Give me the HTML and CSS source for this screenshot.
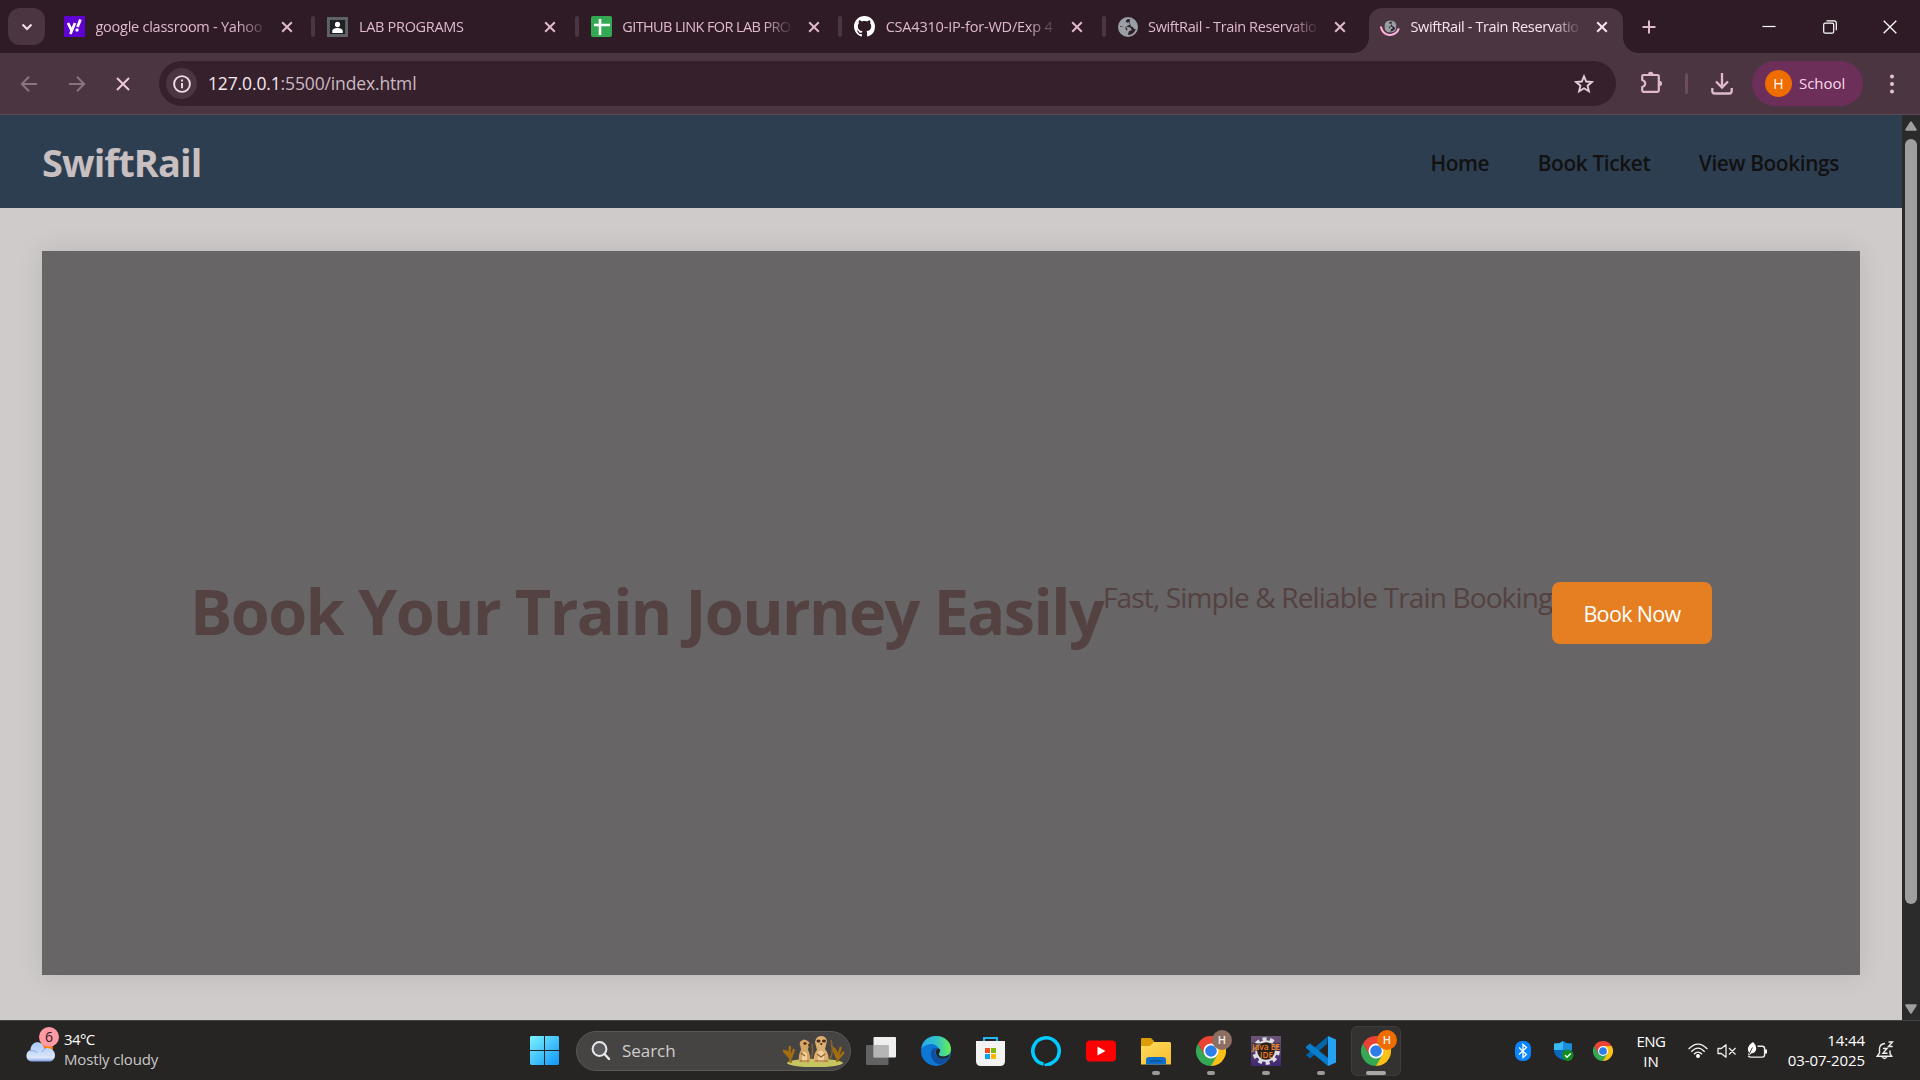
FILE: index.html
```html
<!DOCTYPE html>
<html lang="en">
<head>
<meta charset="utf-8">
<title>SwiftRail - Train Reservation</title>
<link rel="stylesheet" href="styles.css">
</head>
<body>
<svg class="defs" width="0" height="0">
  <symbol id="close" viewBox="0 0 12 12"><path d="M1.2 1.2 10.8 10.8M10.8 1.2 1.2 10.8" fill="none" stroke="currentColor" stroke-width="2"/></symbol>
  <symbol id="globe" viewBox="0 0 20 20"><circle cx="10" cy="10" r="9" fill="#2f1f29" stroke="#9aa0a6" stroke-width="2"/><path d="M1 10Q1 3 8 1.200h3Q7 3.500 8 5q2 1 3 0l1 2.500-4 2 4 1q2 1 1.500 3-3 0-3 2l-1 3.500C4 18.500 1 15 1 10h5q1 0 2 2-1 1 1 1.500 1-2-.5-3L1 9z" fill="#9aa0a6"/><path d="M12 2q5 1 7 7l-1 3q-3 0-3-2-3-.5-2.500-2.500Q11 5.500 12 2z" fill="#9aa0a6"/></symbol>
  <symbol id="chrome" viewBox="0 0 30 30"><path d="M28 7.500A15 15 0 0 1 15 30L15 15 15 7.500z" fill="#fbc116"/><path d="M15 30A15 15 0 0 1 2 7.500L8.500 18.700 21.500 18.700z" fill="#34a853"/><path d="M2 7.500A15 15 0 0 1 28 7.500H15L8.500 18.700z" fill="#ea4335"/><circle cx="15" cy="15" r="7.500" fill="#fff"/><circle cx="15" cy="15" r="5.800" fill="#2f7de9"/></symbol>
</svg>

<div class="screen">
  <header class="tabstrip">
    <button class="tab-search"><svg width="12" height="8" viewBox="0 0 12 8"><path d="m1.500 1.500 4.500 4.500 4.500-4.500" fill="none" stroke="#f3dbe7" stroke-width="2.200"/></svg></button>
    <div class="tab">
      <svg class="favicon" width="21" height="21" viewBox="0 0 21 21"><path d="M0 0h21v21H0z" fill="#5f01d1"/><path d="m4 7 3.500 7.200M11 7l-4.600 11" stroke="#fff" stroke-width="2.700" fill="none"/><path d="m16.500 3.500-3 7.500" stroke="#fff" stroke-width="2.800"/><circle cx="13" cy="14" r="1.700" fill="#fff"/></svg>
      <span class="tab-title t1">google classroom - Yahoo</span><svg class="x" width="12" height="12"><use href="#close"/></svg><i class="sep"></i>
    </div>
    <div class="tab">
      <svg class="favicon" width="21" height="20" viewBox="0 0 22 20" preserveAspectRatio="none"><path d="M0 0h22v20H0z" fill="#5f6368"/><path d="M3 3h16v14H3z" fill="#202124"/><circle cx="11" cy="7.500" r="2.700" fill="#fff"/><path d="M5.500 16v-2c0-4 11-4 11 0v2z" fill="#fff"/></svg>
      <span class="tab-title t2">LAB PROGRAMS</span><svg class="x" width="12" height="12"><use href="#close"/></svg><i class="sep"></i>
    </div>
    <div class="tab">
      <svg class="favicon" width="21" height="21" viewBox="0 0 21 21"><rect width="21" height="21" rx="2" fill="#34a853"/><path d="M9 3v16M3 9h16" stroke="#fff" stroke-width="2.600"/></svg>
      <span class="tab-title t3">GITHUB LINK FOR LAB PRO</span><svg class="x" width="12" height="12"><use href="#close"/></svg><i class="sep"></i>
    </div>
    <div class="tab">
      <svg class="favicon" width="21" height="21" viewBox="0 0 16 16"><path fill="#fff" d="M8 0C3.580 0 0 3.580 0 8c0 3.540 2.290 6.530 5.470 7.590.4.070.55-.17.55-.38 0-.19-.010-.82-.010-1.490-2.010.37-2.530-.49-2.690-.94-.09-.23-.48-.94-.82-1.130-.28-.15-.68-.52-.010-.53.63-.010 1.080.58 1.230.82.72 1.210 1.870.87 2.330.66.070-.52.28-.87.51-1.070-1.780-.2-3.640-.89-3.640-3.950 0-.87.31-1.590.82-2.150-.08-.2-.36-1.020.08-2.120 0 0 .67-.21 2.200.82.64-.18 1.320-.27 2-.27s1.360.09 2 .27c1.530-1.040 2.200-.82 2.200-.82.44 1.100.16 1.920.08 2.120.51.56.82 1.270.82 2.150 0 3.070-1.870 3.750-3.650 3.950.29.25.54.73.54 1.480 0 1.070-.010 1.930-.010 2.200 0 .21.15.46.55.38A8.010 8.010 0 0 0 16 8c0-4.420-3.580-8-8-8z"/></svg>
      <span class="tab-title t4">CSA4310-IP-for-WD/Exp 4</span><svg class="x" width="12" height="12"><use href="#close"/></svg><i class="sep"></i>
    </div>
    <div class="tab">
      <svg class="favicon" width="20" height="20"><use href="#globe"/></svg>
      <span class="tab-title t5">SwiftRail - Train Reservatio</span><svg class="x" width="12" height="12"><use href="#close"/></svg>
    </div>
    <div class="tab active">
      <svg class="favicon" width="20" height="21" viewBox="0 0 21 21"><svg x="4.500" y="4" width="13" height="13"><use href="#globe"/></svg><path d="M1 10.500A9.600 9.600 0 0 0 19.800 12.500" fill="none" stroke="#ffb0dd" stroke-width="2.200"/></svg>
      <span class="tab-title t5">SwiftRail - Train Reservatio</span><svg class="x" width="12" height="12"><use href="#close"/></svg>
    </div>
    <svg class="newtab" width="14" height="14" viewBox="0 0 14 14"><path d="M7 .5v13M.5 7h13" stroke="#e0b9cf" stroke-width="2"/></svg>
    <div class="window-controls">
      <svg width="14" height="14" viewBox="0 0 14 14"><path d="M.5 6.500h13" stroke="#fff" stroke-width="1.200"/></svg>
      <svg width="14" height="14" viewBox="0 0 14 14"><rect x=".7" y="3.200" width="10" height="10" rx="1.500" fill="none" stroke="#fff" stroke-width="1.200"/><path d="M3.500.8H11q2.300 0 2.300 2.300v7.200" fill="none" stroke="#fff" stroke-width="1.200"/></svg>
      <svg width="14" height="14" viewBox="0 0 14 14"><path d="m.7.700 12.600 12.600m0-12.600L.7 13.300" stroke="#fff" stroke-width="1.300"/></svg>
    </div>
  </header>

  <div class="toolbar">
    <div class="nav-buttons">
      <svg width="18" height="18" viewBox="0 0 18 18"><path d="M17 9H2m7-7.300L1.800 9 9 16.300" fill="none" stroke="#8b7380" stroke-width="2"/></svg>
      <svg width="18" height="18" viewBox="0 0 18 18"><path d="M1 9h15M9 1.700 16.200 9 9 16.300" fill="none" stroke="#8b7380" stroke-width="2"/></svg>
      <svg width="14" height="14" viewBox="0 0 14 14"><path d="m1 1 12 12m0-12L1 13" stroke="#efc8dc" stroke-width="2"/></svg>
    </div>
    <div class="omnibox">
      <span class="info"><svg width="18" height="18" viewBox="0 0 18 18"><circle cx="9" cy="9" r="7.900" fill="none" stroke="#f3dbe7" stroke-width="1.900"/><path d="M9 8v5.200M9 4.600v2" stroke="#f3dbe7" stroke-width="1.900"/></svg></span>
      <span class="url"><b>127.0.0.1</b>:5500/index.html</span>
      <svg class="star" width="20" height="20" viewBox="0 0 20 20"><path d="m10 2.300 2.200 5.200 5.700.5-4.300 3.700 1.300 5.500-4.900-2.900-4.900 2.900 1.300-5.500L2.100 8l5.700-.5z" fill="none" stroke="#e4cdd8" stroke-width="1.900"/></svg>
    </div>
    <svg class="ext" width="24" height="24" viewBox="0 0 24 24"><path d="M4.500 4H18.500q1.300 0 1.300 1.300V19.500q0 1.300-1.300 1.300H4.500q-1.300 0-1.300-1.300V16q3-1 3-3.500t-3-3.500V5.300Q3.200 4 4.500 4z" fill="none" stroke="#e0b9cf" stroke-width="2.200" stroke-linejoin="round"/><path d="M9 3.500a2.700 2.700 0 0 1 5.400 0zM20.300 9.800a2.700 2.700 0 0 1 0 5.400z" fill="#e0b9cf"/></svg>
    <i class="bar"></i>
    <svg class="download" width="22" height="22" viewBox="0 0 22 22"><path d="M11 0v14M5 8.500l6 6 6-6M1.300 15v3q0 2.500 2.500 2.500h14.400q2.500 0 2.500-2.500v-3" fill="none" stroke="#e0b9cf" stroke-width="2.300"/></svg>
    <div class="profile"><span class="avatar">H</span><span class="profile-name">School</span></div>
    <svg class="dots" width="4" height="20" viewBox="0 0 4 20"><g fill="#e7c3d6"><circle cx="2" cy="2.500" r="2"/><circle cx="2" cy="10" r="2"/><circle cx="2" cy="17.500" r="2"/></g></svg>
  </div>

  <div class="viewport">
    <div class="page">
      <header class="site-header">
        <div class="logo">SwiftRail</div>
        <nav><a>Home</a><a>Book Ticket</a><a>View Bookings</a></nav>
      </header>
      <main class="content">
        <section class="hero">
          <h1>Book Your Train Journey Easily</h1>
          <p>Fast, Simple &amp; Reliable Train Booking</p>
          <button class="cta">Book Now</button>
        </section>
      </main>
    </div>
    <div class="scrollbar">
      <svg width="12" height="10" viewBox="0 0 12 10"><path d="M6 1.300 10.800 8.700H1.200z" fill="#9f9f9f" stroke="#9f9f9f" stroke-width="2" stroke-linejoin="round"/></svg>
      <i class="thumb"></i>
      <svg width="12" height="10" viewBox="0 0 12 10"><path d="M6 8.700 10.800 1.300H1.200z" fill="#9f9f9f" stroke="#9f9f9f" stroke-width="2" stroke-linejoin="round"/></svg>
    </div>
  </div>

  <footer class="taskbar">
    <div class="weather">
      <div class="cloud">
        <svg width="30" height="24" viewBox="0 0 30 24"><defs><linearGradient id="cl" x2="0" y2="1"><stop offset="0" stop-color="#a9cbfa"/><stop offset=".8" stop-color="#dbe6f8"/><stop offset="1" stop-color="#7f9ee2"/></linearGradient></defs><circle cx="21" cy="9" r="7" fill="#ff7a10"/><path d="M6 22.500a6 6 0 0 1-.5-11.500C6 1 18 1 19 9.500c5-2 11 1 11 6.500 0 4-2.500 6.500-6 6.500z" fill="url(#cl)"/><path d="M5 12c3-1 6 0 7 2M17 13c1-2 2-3 4-3.500" stroke="#7fa7ea" fill="none"/></svg>
        <span class="badge">6</span>
      </div>
      <div class="weather-text"><span class="temp">34°C</span><span class="sky">Mostly cloudy</span></div>
    </div>

    <div class="dock">
      <svg class="start" width="29" height="29" viewBox="0 0 29 29"><defs><linearGradient id="wn" gradientUnits="userSpaceOnUse" x2="29" y2="29"><stop stop-color="#7df3ff"/><stop offset="1" stop-color="#0f95f8"/></linearGradient></defs><path d="M1 0h13v14H0V1zM15 0h13l1 1v13H15zM0 15h14v14H1l-1-1zM15 15h14v13l-1 1H15z" fill="url(#wn)"/></svg>
      <div class="search">
        <svg width="20" height="20" viewBox="0 0 20 20"><circle cx="8.500" cy="8" r="6.900" fill="#5a595b" stroke="#e9eaef" stroke-width="2"/><path d="m13.500 13 4.500 5" stroke="#e9eaef" stroke-width="2.400" stroke-linecap="round"/></svg>
        <span>Search</span>
        <svg class="meerkats" width="62" height="32" viewBox="0 0 62 32">
          <ellipse cx="32" cy="28" rx="28" ry="4.200" fill="#c5c660"/>
          <path d="M8 28Q6 20 7 11M8 24l-7-8q5 1 7 6M8 23l3-9M54 27q1-8 4-15M54 23l-4-10q4 3 4 8M55 24l6-7" stroke="#a46d10" stroke-width="2.400" fill="none"/>
          <path d="M27 24q4-4 2-15M47 24q4-6 1-19" stroke="#8c6231" stroke-width="1.500" fill="none"/>
          <path d="M16 27q-1-7 2-12c0-4-2-5-1-8q4-5 9 0c1 3-1 5-1 8 3 6 2 9 1 13z" fill="#d5a565"/>
          <path d="M31 27q-1-8 3-12l-2-8q1-6 6-6t6 5l-2 8q5 6 3 14z" fill="#dcae70"/>
          <path d="M19 18q3-3 5 1v8h-5zM35 17q4-3 6 1v9h-6z" fill="#efd09c"/>
          <ellipse cx="22" cy="8.500" rx="1.600" ry="1.300" fill="#4a2b18"/><ellipse cx="35.500" cy="6" rx="2" ry="1.600" fill="#4a2b18"/><ellipse cx="41" cy="6" rx="2" ry="1.600" fill="#4a2b18"/><circle cx="38.300" cy="9" r="1.100" fill="#4a2b18"/><circle cx="26" cy="10" r="1" fill="#4a2b18"/>
          <path d="M17 26h9M32 26h13M18 18l4 3M34 19l4 3 4-3" stroke="#916027" stroke-width="1.200" fill="none"/>
        </svg>
      </div>
      <div class="app"><svg width="30" height="30" viewBox="0 0 30 30"><rect x="7.500" y="1" width="22.500" height="20.500" rx="1" fill="#efefef"/><rect y="9" width="22.500" height="20" rx="1" fill="#777" opacity=".75"/><path d="M7.500 9h15v12.500h-15z" fill="#b5b5b5"/></svg></div>
      <div class="app"><svg width="30" height="30" viewBox="0 0 30 30"><defs><linearGradient id="ed"><stop stop-color="#25a9ee"/><stop offset=".55" stop-color="#35c6c4"/><stop offset="1" stop-color="#68ef4b"/></linearGradient></defs><circle cx="15" cy="15" r="15" fill="#0c78d4"/><path d="M.3 13C1 5 7 0 15 0c9 0 15 6 15 13 0 5-4 7.500-8 7.500-3 0-5-1-4-3 2-3-1-9-7-9.500C6 8 1 11 .3 13z" fill="url(#ed)"/><path d="M10.500 14c-2 6 1 14 9 14.500 4-1 7-4 9-7.500-8 4-15 1-14-5.500 0-3 2-3 2-3-2-1-5 0-6 1.500z" fill="#0f4f9f"/><path d="M15 14.500c.5-2 3-3 4-1 .5 1.500-.5 2.500-1 4-.5 2 1 3 4 3 3 0 5-1 6.500-2.500l-.5 3c-8 4-14 .5-13-6.500z" fill="#272524"/></svg></div>
      <div class="app"><svg width="30" height="30" viewBox="0 0 30 30"><path d="M8 7V2h13v5" fill="none" stroke="#28b3f1" stroke-width="2"/><path d="M0 5h29v20q0 5-5 5H5q-5 0-5-5z" fill="#f3f3f3"/><path d="M9 12h5v5H9z" fill="#f25022"/><path d="M15 12h5v5h-5z" fill="#7fba00"/><path d="M9 18h5v5H9z" fill="#00a4ef"/><path d="M15 18h5v5h-5z" fill="#ffb900"/></svg></div>
      <div class="app"><svg width="30" height="30" viewBox="0 0 30 30"><path d="M12.500 28A13.200 13.200 0 1 1 21 26.800Q17 29 13.500 29.500" fill="none" stroke="#00caff" stroke-width="3.600"/></svg></div>
      <div class="app"><svg width="30" height="30" viewBox="0 0 30 30"><rect y="4.500" width="30" height="21" rx="4" fill="#f00"/><path d="M11.500 10.500v9l8-4.500z" fill="#fff"/></svg></div>
      <div class="app running"><svg width="30" height="30" viewBox="0 0 30 30"><defs><linearGradient id="fo" x2="1" y2="1"><stop stop-color="#ffdc60"/><stop offset="1" stop-color="#f8bd2c"/></linearGradient></defs><path d="M0 3q0-1 1-1h9l3 3v5H0z" fill="#dc9c08"/><path d="M0 10h9l4-4h16l1 1v21.500H0z" fill="url(#fo)"/><path d="M5 28.500V24q0-3 3-3h14q3 0 3 3v4.500z" fill="#0f6fc8"/><path d="M9 25h12" stroke="#08468a"/></svg></div>
      <div class="app running"><svg width="30" height="30"><use href="#chrome"/></svg><span class="user brown">H</span></div>
      <div class="app running"><svg width="30" height="30" viewBox="0 0 30 30"><defs><linearGradient id="je" x2="0" y2="1"><stop stop-color="#6b5576"/><stop offset="1" stop-color="#412873"/></linearGradient></defs><path d="M0 0h30v30H0z" fill="url(#je)"/><circle cx="15" cy="15" r="11.800" fill="none" stroke="#dedee3" stroke-width="4" stroke-dasharray="4 3.400"/><circle cx="15" cy="15" r="9.800" fill="#2c211d" stroke="#dedee3" stroke-width="2"/><path d="M1 7h28v8H1z" fill="#2c211d" opacity=".6"/><g class="ide"><text x="1" y="13.500" font-size="8" textLength="28" lengthAdjust="spacingAndGlyphs">Java EE</text><text x="9" y="22" font-size="8" textLength="13" lengthAdjust="spacingAndGlyphs">IDE</text></g></svg></div>
      <div class="app running"><svg width="30" height="30" viewBox="0 0 30 30"><path d="m22 0-1 8L4 22.500 0 19z" fill="#0065a9"/><path d="M0 10.500 4 7.500 22 22v8L0 12z" fill="#087dcb"/><path d="m22 0 8 3.500v23L22 30z" fill="#27a2f2"/></svg></div>
      <div class="app running current"><svg width="30" height="30"><use href="#chrome"/></svg><span class="user orange">H</span></div>
    </div>

    <div class="tray">
      <svg width="16" height="20" viewBox="0 0 16 20"><rect width="16" height="20" rx="7" fill="#0a84ff"/><path d="m4 6.500 7.500 7L8 16.500v-13l3.500 3L4 13.500" fill="none" stroke="#fff" stroke-width="1.300"/></svg>
      <svg class="shield" width="20" height="20" viewBox="0 0 20 20"><path d="M0 2.500Q6 3 9 0q3 3 9 2.500V9q0 7-9 10Q0 16 0 9z" fill="#0a68be"/><path d="M0 2.500Q6 3 9 0v9H0z" fill="#39b9f2"/><path d="M9 0q3 3 9 2.500V9H9z" fill="#1b8ddd"/><circle cx="13.700" cy="14.200" r="5.800" fill="#138a22"/><path d="m11 14.300 2 2 3.700-3.800" fill="none" stroke="#fff" stroke-width="1.400"/></svg>
      <svg class="tray-chrome" width="20" height="20"><use href="#chrome"/></svg>
      <div class="lang"><span class="eng">ENG</span><span>IN</span></div>
      <svg class="wifi" width="20" height="16" viewBox="0 0 20 16"><g fill="none" stroke="#f3f3f3" stroke-width="1.400"><path d="M.6 6Q10-3.800 19.400 6M3.300 8.700Q10 1.500 16.700 8.700M6 11.300Q10 7 14 11.300"/></g><circle cx="10" cy="13" r="2" fill="#fff"/></svg>
      <svg class="mute" width="20" height="14" viewBox="0 0 20 14"><path d="M1 4.500h3.300L9 .8v12.400L4.300 9.500H1zM12 4l6.500 6.500m0-6.500L12 10.500" fill="none" stroke="#eee" stroke-width="1.300" stroke-linejoin="round"/></svg>
      <svg class="battery" width="20" height="17" viewBox="0 0 20 17"><path d="M10.500 4.200h4.800q2.300 0 2.300 2.300v6.300q0 2.300-2.300 2.300H4q-2 0-2.700-1.300" fill="none" stroke="#eee" stroke-width="1.400"/><path d="M18 7.500h2v4h-2zM6 0q3.500 3 3.200 7-.4 4-4.700 4.300L2 13.500l-1-.7 1-2.500Q-1.500 5 6 0z" fill="#fff"/><path d="m2 12.500 3.500-7" stroke="#272524" stroke-width=".9"/></svg>
      <div class="clock"><span>14:44</span><span>03-07-2025</span></div>
      <svg class="bell" width="18" height="19" viewBox="0 0 18 19"><path d="M9 2.500Q3.500 3 3.500 8v4l-2.200 3.200h14.400L14 12.500V9.500M6 15.500q2.500 4 5 0M7 7.500h4l-4 4.800h4.500M12.500 1h4l-4 4.500h4.200" fill="none" stroke="#eee" stroke-width="1.400"/></svg>
    </div>
  </footer>
</div>
</body>
</html>
```
FILE: styles.css
```css
* { box-sizing: border-box; }
body { margin: 0; overflow: hidden; font-family: "Open Sans", "Noto Sans", sans-serif; }
.defs { position: absolute; }
svg { display: block; flex: none; }
button { border: 0; padding: 0; font-family: inherit; }
.screen { width: 1920px; height: 1080px; display: flex; flex-direction: column; }

/* tab strip */
.tabstrip { height: 53px; flex: none; display: flex; align-items: center; padding-left: 8px; background: #2e1b26; }
.tab-search { width: 37px; height: 37px; border-radius: 12px; background: #4b3541; display: grid; place-items: center; margin-right: 7px; }
.tab { width: 263.4px; height: 45px; margin-top: 8px; padding: 0 0 8px 12px; display: flex; align-items: center; flex: none; color: #e0b9cf; }
.favicon { margin-right: 10.500px; }
.tab-title { width: 170px; overflow: hidden; white-space: nowrap; font-size: 14.500px; line-height: 22px; -webkit-mask-image: linear-gradient(90deg, #000 142px, transparent 172px); mask-image: linear-gradient(90deg, #000 142px, transparent 172px); }
.t1 { letter-spacing: -.25px; }
.t2 { letter-spacing: -.3px; }
.t3 { letter-spacing: -.62px; }
.t4 { letter-spacing: -.2px; }
.t5 { letter-spacing: -.37px; }
.x { margin-left: 15.500px; }
.sep { width: 4px; height: 21px; margin-left: auto; border-radius: 2px; background: #4b3541; }
.active { position: relative; width: 254px; padding-left: 11px; border-radius: 13px 13px 0 0; background: #4b3541; color: #f8e4ee; }
.active::before, .active::after { content: ""; position: absolute; bottom: 0; width: 15px; height: 15px; }
.active::before { left: -15px; background: radial-gradient(circle at 0 0, transparent 14.500px, #4b3541 15px); }
.active::after { right: -15px; background: radial-gradient(circle at 100% 0, transparent 14.500px, #4b3541 15px); }
.newtab { margin-left: 19px; }
.window-controls { display: flex; gap: 46.500px; margin-left: auto; padding-right: 23px; }

/* toolbar */
.toolbar { height: 62px; flex: none; display: flex; align-items: center; background: #4b3541; border-bottom: 1px solid #5c4a53; padding: 0 26px 0 20px; }
.nav-buttons { display: flex; align-items: center; gap: 30px; width: 139px; }
.omnibox { width: 1457px; height: 45px; border-radius: 23px; background: #35202b; display: flex; align-items: center; padding: 0 22px 0 7px; }
.info { width: 31px; height: 31px; border-radius: 50%; background: #4b3541; display: grid; place-items: center; }
.url { margin-left: 11px; padding-bottom: 2px; font-size: 17.500px; letter-spacing: -.14px; color: #cdb9c3; }
.url b { font-weight: 400; color: #f6e9f0; }
.star { margin-left: auto; }
.ext { margin-left: 23px; margin-bottom: 2px; }
.bar { width: 3px; height: 21px; margin-left: 22px; background: #6a4c5c; border-radius: 2px; }
.download { margin-left: 23px; }
.profile { width: 111px; height: 45px; margin-left: 19px; border-radius: 23px; background: #6b2f5a; color: #ffd8ec; display: flex; align-items: center; gap: 7px; padding-left: 13px; font-size: 15px; letter-spacing: -.05px; }
.profile-name { padding-bottom: 2px; }
.avatar { width: 27px; height: 27px; border-radius: 50%; background: #ef6c00; color: #fff; font-size: 14px; line-height: 27px; text-align: center; }
.dots { margin-left: 27px; }

/* browser viewport */
.viewport { height: 905px; display: flex; flex: none; }
.page { width: 1902px; background: #cfcbca; overflow: hidden; }
.site-header { height: 93px; display: flex; align-items: center; justify-content: space-between; padding: 0 63px 0 42px; background: #2d3e50; }
.logo { font-size: 38px; font-weight: 700; letter-spacing: -.9px; color: #c8bfc1; line-height: 92px; }
.site-header nav { display: flex; gap: 48.500px; padding-top: 2px; font-size: 20.800px; font-weight: 600; letter-spacing: -.35px; color: #111; }
.content { padding: 43px 42px; }
.hero { height: 724px; background: #676566; color: #544141; box-shadow: 0 0 25px rgba(0, 0, 0, .1); display: flex; align-items: center; justify-content: center; }
.hero h1 { margin: 0; height: 62px; width: 913px; font-size: 63px; line-height: 58px; letter-spacing: -1.570px; white-space: nowrap; }
.hero p { margin: 0; height: 62px; width: 449px; font-size: 28px; line-height: 31px; letter-spacing: -.85px; white-space: nowrap; }
.cta { width: 160px; height: 62px; padding-top: 1px; border-radius: 8px; background: #e67e22; color: #fff; font-size: 21.500px; letter-spacing: -.65px; }
.scrollbar { width: 18px; background: #2b2b2b; display: flex; flex-direction: column; align-items: center; padding: 6px 0; }
.thumb { width: 12px; height: 765px; border-radius: 6px; background: #9f9f9f; margin: 8px 0 auto; }

/* taskbar */
.taskbar { height: 60px; flex: none; display: flex; background: #272524; border-top: 1px solid #454342; color: #fff; }
.weather { width: 530px; flex: none; display: flex; padding: 4px 0 0 25px; }
.cloud { position: relative; padding-top: 14px; }
.badge { position: absolute; left: 14px; top: 2px; width: 20px; height: 20px; border-radius: 50%; background: #ff99a4; color: #222; font-size: 14px; line-height: 20px; text-align: center; }
.weather-text { display: flex; flex-direction: column; margin-left: 9px; padding-top: 4px; font-size: 15px; line-height: 20px; white-space: nowrap; }
.temp { letter-spacing: -.6px; }
.sky { letter-spacing: -.15px; color: #c9c8c7; }
.dock { width: 895px; display: flex; align-items: center; flex: none; }
.start { margin-right: 17px; }
.search { width: 275px; height: 40px; border-radius: 20px; background: #464443; border: 1px solid #5a5857; display: flex; align-items: center; padding: 0 5px 0 14px; margin-right: 5px; flex: none; font-size: 17px; color: #cfcdcc; }
.search span { margin-left: 11px; letter-spacing: -.05px; }
.meerkats { margin-left: auto; }
.app { position: relative; width: 50px; height: 50px; display: grid; place-items: center; margin-right: 5px; flex: none; }
.running::after { content: ""; position: absolute; bottom: 1px; left: 21px; width: 8px; height: 4px; border-radius: 2px; background: #9b9a99; }
.current { background: #343231; border: 1px solid #3f3d3c; border-radius: 6px; margin-right: 0; }
.current::after { left: 14px; width: 20px; bottom: 0; background: #a9a8a7; }
.ide { fill: #ef7d1f; font-weight: 600; }
.user { position: absolute; left: 26px; top: 4px; width: 20px; height: 20px; border-radius: 50%; font-size: 11px; line-height: 20px; text-align: center; font-weight: 600; color: #eee; }
.current .user { left: 25px; top: 3px; }
.brown { background: #8d6e63; }
.orange { background: #ef6c00; }
.tray { flex: 1; display: flex; align-items: center; font-size: 15px; line-height: 20px; margin-left: 90px; }
.shield { margin-left: 23px; }
.tray-chrome { margin-left: 19px; }
.lang { width: 36px; margin-left: 20px; display: flex; flex-direction: column; text-align: center; }
.eng { letter-spacing: -.5px; }
.wifi { margin-left: 19px; }
.mute { margin-left: 9px; }
.battery { margin-left: 10px; }
.clock { width: 84px; margin-left: 14px; padding-bottom: 2px; display: flex; flex-direction: column; text-align: right; white-space: nowrap; letter-spacing: -.1px; }
.bell { margin-left: 11px; }
```
